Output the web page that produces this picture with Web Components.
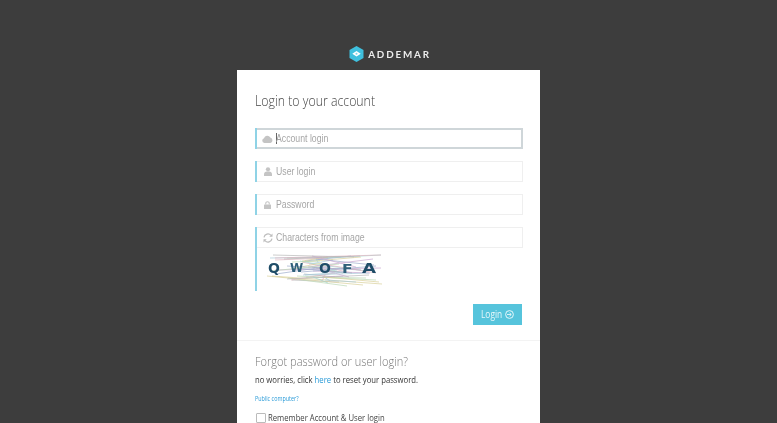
<!DOCTYPE html>
<html><head><meta charset="utf-8"><style>
html,body{margin:0;height:423px;overflow:hidden;background:#3d3d3d}
body{font-family:"Open Sans","Noto Sans",sans-serif;filter:blur(.45px)}
</style></head><body>
<login-page>
<add-logo slot="logo"></add-logo>
<login-field icon="cloud" placeholder="Account login" focused></login-field>
<login-field icon="user" placeholder="User login"></login-field>
<login-field icon="lock" placeholder="Password"></login-field>
<login-field icon="refresh" placeholder="Characters from image"><captcha-image></captcha-image></login-field>
</login-page>
<script>
const svgIcons={
cloud:'<svg width="11" height="8" viewBox="0 0 11 8"><path fill="#c4c4c4" d="M2.4 8A2.4 2.4 0 0 1 2 3.3 3.4 3.4 0 0 1 8.300 2.600 2.800 2.800 0 0 1 8.500 8Z"/></svg>',
user:'<svg width="8" height="9" viewBox="0 0 9 10"><circle cx="4.500" cy="2.500" r="2.400" fill="#c4c4c4"/><path fill="#c4c4c4" d="M0 10V8c0-1.800 1.600-2.800 2.900-3h3.200C7.400 5.200 9 6.200 9 8v2Z"/></svg>',
lock:'<svg width="7" height="8" viewBox="0 0 8 9"><path fill="none" stroke="#c4c4c4" stroke-width="1.200" d="M2 4V2.700a2 2 0 0 1 4 0V4"/><rect y="3.800" width="8" height="5.200" rx=".6" fill="#c4c4c4"/></svg>',
refresh:'<svg width="10" height="10" viewBox="0 0 10 10"><g fill="none" stroke="#bdbdbd" stroke-width="1.200"><path d="M1 4.300A4 4 0 0 1 8 2.400"/><path d="M9 5.700A4 4 0 0 1 2 7.600"/></g><path fill="#bdbdbd" d="M9.500.6v3.200H6.300ZM.5 9.400V6.200h3.200Z"/></svg>'};
function def(name,html){customElements.define(name,class extends HTMLElement{
constructor(){super();this.attachShadow({mode:'open'}).innerHTML=typeof html==='function'?html(this):html}})}
def('add-logo',`<style>:host{display:flex;align-items:center;justify-content:center;gap:4px;height:18px;padding-left:1px}
span{font:700 9.800px/18px Lato,"Open Sans",sans-serif;letter-spacing:1.850px;color:#ececec;margin-right:-2px}
svg{display:block}</style>
<svg width="15" height="16" viewBox="0 0 15 16"><path fill="#3fc0de" d="M7.500 0l7 3.900v8.200L7.500 16l-7-3.900V3.900Z"/><path fill="#fff" d="M7.500 5l4.200 2.700-4.200 2.700-4.200-2.700Z"/><circle cx="7.500" cy="7.700" r="1" fill="#7fd5e8"/></svg><span>ADDEMAR</span>`);
customElements.define('login-field',class extends HTMLElement{
constructor(){super();const f=this.hasAttribute('focused');
this.attachShadow({mode:'open'}).innerHTML=`<style>
:host{display:block;border-left:2px solid #8fd3e6;margin-bottom:12px;width:268px;box-sizing:border-box}
.box{height:21px;box-sizing:border-box;display:flex;align-items:center;border:1px solid #efefef;border-left:0;padding-left:5px}
:host([focused]) .box{border:2px solid #cfd6d9;border-left:0}
.ic{width:11px;display:flex;justify-content:center;margin-right:3px}
.t{font:10.500px/1 "Liberation Sans",Arial,sans-serif;color:#a6a6a6;white-space:nowrap;transform:scaleX(.83);transform-origin:0 50%}
.caret{width:1px;height:11px;background:#666;margin-right:-1px}
</style><div class="box"><span class="ic">${svgIcons[this.getAttribute('icon')]}</span>${f?'<i class="caret"></i>':''}<span class="t">${this.getAttribute('placeholder')}</span></div><slot></slot>`}});
def('captcha-image',()=>{
const cols=['#c8a6d0','#a9cad8','#d8d09a','#bcd8b4','#e0b4c0','#9eaccb','#b8b8b8','#a4d6d0'];
let seed=12345;const r=n=>{seed=(seed*48271)%2147483647;return (seed>>3)%n};
let lines='';
for(let i=0;i<48;i++){
const x1=r(60),x2=50+r(66),y1=5+r(26),y2=Math.max(1,Math.min(36,y1-8+r(20)));
lines+=`<path d="M${x1} ${y1}L${x2} ${y2}" stroke="${cols[i%8]}" stroke-width=".7" fill="none"/>`}
return `<style>:host{display:block;padding:2px 0 0 10px;box-sizing:border-box;height:43px}
.c{position:relative;width:116px;height:37px}
svg{position:absolute;inset:0}
.l{position:absolute;inset:0;display:block;font:700 13px/37px "DejaVu Sans",sans-serif;color:#1f4d68;white-space:nowrap}
.l b{position:absolute;top:0;font-weight:700;transform-origin:0 50%}
</style><div class="c"><svg width="116" height="37" viewBox="0 0 116 37">${lines}</svg>
<span class="l"><b style="left:1px;font-size:14px">Q</b><b style="left:23px;font-size:12px;color:#2f6079">W</b><b style="left:52px;font-size:14px">O</b><b style="left:75px;font-size:13px;color:#2f6079;transform:scaleX(1.2)">F</b><b style="left:95px;font-size:14px;transform:scaleX(1.3)">A</b></span></div>`});
def('login-page',`<style>
:host{display:flex;flex-direction:column;align-items:center;padding-top:45px}
.card{width:303px;height:353px;overflow:hidden;margin-top:7px;background:#fff}
.top{padding:22px 17px 15px 18px;box-sizing:border-box;border-bottom:1px solid #f3f3f3;height:271px}
h2{margin:0;font:300 14px/18px "Open Sans",sans-serif;color:#444;white-space:nowrap;transform:scaleX(.88);transform-origin:0 50%}
h2.m{font-size:13px;color:#777;transform:scaleX(.85)}
.fields{margin-top:18px}
.act{display:flex;justify-content:flex-end;padding-right:1px;margin-top:13px}
.btn{width:49px;height:21px;box-sizing:border-box;padding-left:8px;background:#56c4dc;color:#e6f7fa;display:flex;align-items:center;gap:3px}
.btn span{width:21px;font:400 10.200px/21px "Open Sans",sans-serif;transform:scaleX(.82);transform-origin:0 50%}
.bot{padding:11px 17px 0 18px}
p{margin:0;font:400 9px/14px "Open Sans",sans-serif;color:#333;white-space:nowrap;transform:scaleX(.857);transform-origin:0 50%}
a{color:#2a9bd8;text-decoration:none}
.pub{display:block;font:400 6.500px/10px "Open Sans",sans-serif;margin-top:7px;white-space:nowrap;transform:scaleX(.83);transform-origin:0 50%}
label{display:flex;align-items:center;gap:2px;font:400 9px/14px "Open Sans",sans-serif;color:#444;margin-top:7px;margin-left:1px;white-space:nowrap}
label span:last-child{transform:scaleX(.855);transform-origin:0 50%}
.cb{width:8px;height:8px;border:1px solid #bbb;border-radius:1px;background:#fff}
</style>
<slot name="logo"></slot>
<div class="card">
<div class="top"><h2>Login to your account</h2>
<div class="fields"><slot></slot></div>
<div class="act"><div class="btn"><span>Login</span><svg width="9" height="9" viewBox="0 0 9 9"><circle cx="4.500" cy="4.500" r="3.900" fill="none" stroke="#e6f7fa"/><path d="M2 4.500h4M4.500 2.800l1.800 1.700-1.800 1.700" fill="none" stroke="#e6f7fa" stroke-width=".9"/></svg></div></div></div>
<div class="bot"><h2 class="m">Forgot password or user login?</h2>
<p style="margin-top:3px">no worries, click <a>here</a> to reset your password.</p>
<a class="pub">Public computer?</a>
<label><span class="cb"></span><span>Remember Account &amp; User login</span></label></div>
</div>`);
</script>
</body></html>
